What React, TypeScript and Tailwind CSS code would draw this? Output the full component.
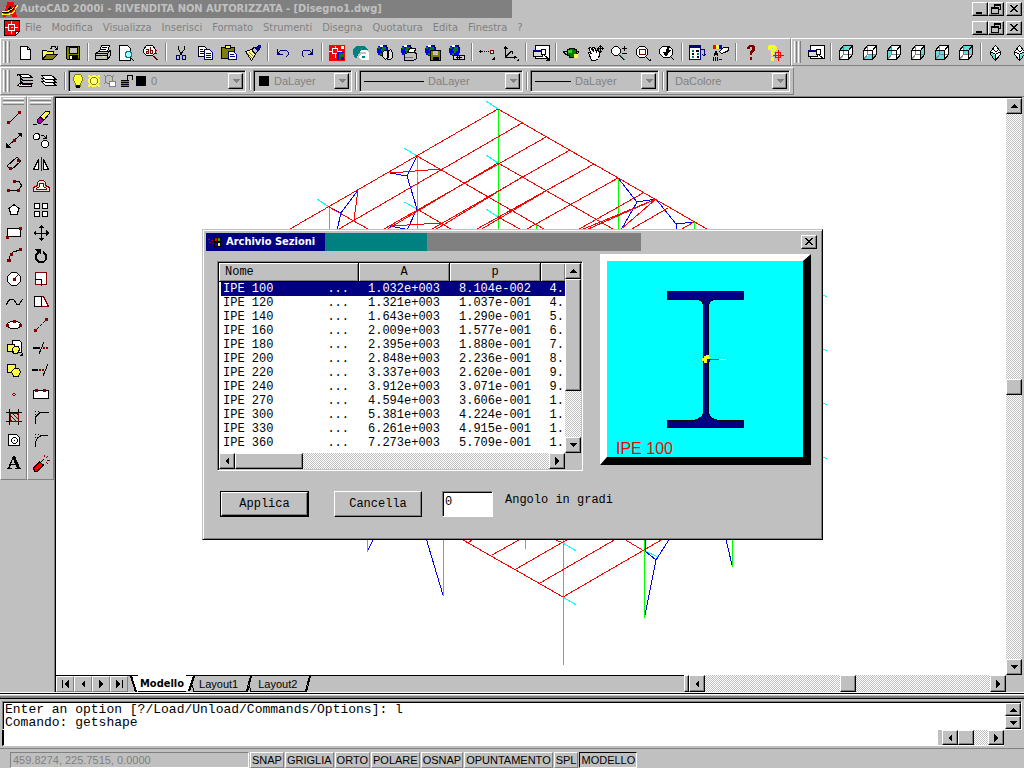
import { useState, type ReactNode } from 'react'
import clsx from 'clsx'

/** [path data, fill, stroke] */
type Shape = [string, string, string?]

type IconDef = { label: string; shapes: Shape[] }

const K = '#000000'
const W = '#ffffff'
const G = '#808080'
const NAVY = '#000080'
const OLIVE = '#808000'
const MAROON = '#800000'
const TEAL = '#008080'
const AQUA = '#60dede'
const YELLOW = '#ffff40'
const RED = '#ff0000'
const BLUE = '#0000ff'
const GREEN = '#008000'

const RAISED =
  'border border-t-white border-l-white border-r-black border-b-black bg-[#c0c0c0] shadow-[inset_-1px_-1px_#808080]'
const SUNKEN =
  'border border-t-[#808080] border-l-[#808080] border-r-white border-b-white shadow-[inset_1px_1px_#000]'
const DITHER =
  '[background:repeating-conic-gradient(#fff_0_25%,#c0c0c0_0_50%)_0_0/2px_2px]'

// Shared pieces of the "web" icons
const globe: Shape[] = [
  ['M1 4h1v-2h2v-1h5v1h2v2h1v5h-1v2h-2v1h-5v-1h-2v-2h-1z', BLUE],
  ['M2 3h2v2h-2zM6 3h4v4h-2v2h-2v-2h-1v-2h1zM4 9h2v2h-2z', GREEN],
  ['M4 1h3v2h-3z', W],
  ['M9 1h2v2h1v6h-1v-5h-1v-2h-1z', K],
]

const cube = (face: string): Shape[] => [
  ['M2.5 6.5l4-5h9v9l-4 5h-9z', W, K],
  [face, AQUA],
  ['M6.5 2v8.5h9M6.5 10.5l-4 5', 'none', G],
  ['M2.5 6.5h9v9h-9zM11.5 6.5l4-5M11.5 15.5l4-5M2.5 6.5l4-5h9v9l-4 5', 'none', K],
]

const iso = (face: string): Shape[] => [
  ['M8.5 1.5l5 6v3l-5 6l-5-6v-3z', W, K],
  [face, AQUA],
  ['M3.5 7.5l5 3l5-3M8.5 10.5v6M6 5l3 3l3-3', 'none', K],
]

const standardGroups: IconDef[][] = [
  [
    { label: 'Nuovo', shapes: [['M4.5 2.5h7l3 3v10h-10z', W, K], ['M11.5 2.5v3h3', 'none', K]] },
    {
      label: 'Apri',
      shapes: [
        ['M2.5 15.5v-9h4l1 1h6v3', YELLOW, K],
        ['M2.5 15.5l4-5h11l-5 5z', OLIVE, K],
        ['M10 4.5h1l1-2h3l2 3M15 5.5h3M17.5 2v4', 'none', K],
      ],
    },
    {
      label: 'Salva',
      shapes: [
        ['M2.5 2.5h13v13h-12l-1-1z', OLIVE, K],
        ['M5 3h8v6h-8z', '#c0c0c0', K],
        ['M5 11h9v5h-9z', K],
        ['M6 12h2v3h-2z', W],
      ],
    },
  ],
  [
    {
      label: 'Stampa',
      shapes: [
        ['M5.5 7.5l2-6h8l-2 6z', W, K],
        ['M8 3.5h5M7 5.5h5', 'none', K],
        ['M1.5 9.5l3-2h10l2-1v5l-3 4h-12z', '#c0c0c0', K],
        ['M1.5 9.5h12v6M2 11.5h11M13.5 9.5l3-3', 'none', K],
        ['M9 12h2v1h-2z', YELLOW],
      ],
    },
    {
      label: 'Anteprima di stampa',
      shapes: [
        ['M1.5 1.5h8l3 3v12h-11z', W, K],
        ['M7 8.5h1v-1h4v1h1v4h-1v1h-4v-1h-1z', '#a0ffff', TEAL],
        ['M13 14l3 3', 'none', NAVY],
        ['M12 13l4 4', 'none', K],
      ],
    },
    {
      label: 'Controllo ortografia',
      shapes: [
        ['M1.5 5.5l3-4h6l3 4v3l-3 3h-6l-3-3z', W, K],
        ['M4 5.5h2v4M6 7.5h-2v2h2M8.5 3v6.5h2v-3h-2M15 6.5h-2v3h2', 'none', MAROON],
        ['M11 12l4 4', 'none', K],
        ['M12 12l4 4', 'none', MAROON],
      ],
    },
  ],
  [
    {
      label: 'Taglia',
      shapes: [
        ['M6.5 1.5v4l4 6M12.5 1.5v4l-5 6', 'none', K],
        ['M4.5 11.5h3v4h-3zM10.5 11.5h3v4h-3z', 'none', NAVY],
      ],
    },
    {
      label: 'Copia',
      shapes: [
        ['M2.5 2.5h6l2 2v8h-8z', W, K],
        ['M4 5.5h3M4 7.5h4M4 9.5h4', 'none', K],
        ['M8.5 5.5h5l3 3v7h-8z', W, NAVY],
        ['M10 9.5h5M10 11.5h5M10 13.5h5', 'none', NAVY],
      ],
    },
    {
      label: 'Incolla',
      shapes: [
        ['M1.5 3.5h13v11h-13z', OLIVE, K],
        ['M5.5 1.5h5v3h-5z', YELLOW, K],
        ['M8.5 7.5h5l3 3v5h-8z', W, NAVY],
        ['M10 10.5h4M10 12.5h5', 'none', NAVY],
      ],
    },
    {
      label: 'Corrispondenza proprietà',
      shapes: [
        ['M1.5 7.5l6-2l4 5l-4 6z', '#fff8a0', K],
        ['M3 9l5 5M5 8l5 5', 'none', OLIVE],
        ['M8 5l3-2l3 4l-3 3z', '#c0c0c0', K],
        ['M12 4l4-3l1 2l-3 4z', NAVY, NAVY],
      ],
    },
  ],
  [
    { label: 'Annulla', shapes: [['M3.5 5v5h5M4 9l3-3h5l2 2v3l-2 2', 'none', NAVY], ['M3 6l4 5h-4z', NAVY]] },
    { label: 'Ripeti', shapes: [['M14.5 5v5h-5M14 9l-3-3h-5l-2 2v3l2 2', 'none', NAVY], ['M15 6l-4 5h4z', NAVY]] },
  ],
  [
    {
      label: 'Oggi',
      shapes: [
        ['M1 1h16v16h-16z', RED],
        ['M4.5 4.5h5v5h-5zM7 1.5v3M7 9.5v4M1 7h3M10 7h4', 'none', W],
        ['M9 8h7v8h-7z', BLUE],
        ['M11 9h5v4h-3v3h-2z', GREEN],
        ['M13 2h3v3h-3z', W],
      ],
    },
    {
      label: 'Point A',
      shapes: [
        ['M1 10v-4l3-4h8l4 4h-6l-4 4l-1 4h-2z', TEAL],
        ['M7 8l3-2h4l3 3v7h-8l-2-2v-2l3-2h4v-2z', W],
        ['M10 12h3v2h-3z', TEAL],
      ],
    },
    { label: 'Meet Now', shapes: [...globe, ['M6.5 8.5l2-2h3l1 2v5l-3 2l-3-3zM11.5 7.5l3-2l2 3v5l-2 2h-3z', '#e0e0e0', K]] },
    { label: 'Pubblica sul Web', shapes: [...globe, ['M7.5 8.5l2-4h6l-1 4z', W, K], ['M4.5 10.5l3-2h8l1 2v4l-3 2h-9z', '#c0c0c0', K], ['M5 13.5h8', 'none', OLIVE]] },
    { label: 'eTransmit', shapes: [...globe, ['M6.5 6.5h10v10h-10z', OLIVE, K], ['M9 7h5v4h-5z', '#c0c0c0'], ['M9 13h6v4h-6z', K]] },
    { label: 'Inserisci collegamento ipertestuale', shapes: [...globe, ['M5.5 11.5h6v4h-6zM9.5 11.5h7v4h-7z', '#d0d0d0', K], ['M8 13.5h6', 'none', K]] },
  ],
  [
    {
      label: 'Punto di riferimento',
      shapes: [
        ['M1 7.5h4M2.5 6v3M6 7.5h1M8 7.5h1M10 7.5h1', 'none', K],
        ['M12.5 6.5h3v3h-3z', W, MAROON],
        ['M13 16h4v-4z', K],
      ],
    },
    { label: 'UCS', shapes: [['M3.5 3v10h10M2 5l1.5-2l2 2M3.5 13l6-6M9 7.5h1v2M12 12l2 1.5l-2 1.5', 'none', K], ['M14 17h3v-3z', K]] },
  ],
  [
    {
      label: 'Viste con nome',
      shapes: [
        ['M3.5 1.5h14v13h-14z', W, K],
        ['M1.5 6.5h9v6h-9z', '#dddddd', K],
        ['M1 6h10v2h-10z', NAVY],
        ['M9.5 5.5h4v5h-4z', W, K],
        ['M12 11l5 4', 'none', K],
        ['M13 17h5v-5z', K],
      ],
    },
  ],
  [
    {
      label: 'Orbita 3D',
      shapes: [
        ['M1 8l3-1h10l3 1l-3 3h-9z', 'none', K],
        ['M5 5h2v-1h5v1h2v6h-2v2h-5v-2h-2z', GREEN, K],
        ['M6 6h4v3h-4z', '#30d030'],
        ['M12 10h4v4h-4z', YELLOW],
      ],
    },
    {
      label: 'Pan tempo reale',
      shapes: [
        ['M2.5 8.5l3 1l-3-5l2-1l3 4l-1-4h2l2 4l1-2h1l1 5l-1 4l-3 2h-4z', W, K],
        ['M14.5 1v8M11 4.5h7M13 2.5h3M13 7.5h3M12.5 3v3M16.5 3v3', 'none', K],
      ],
    },
    {
      label: 'Zoom tempo reale',
      shapes: [
        ['M1.5 5.5l3-3h3l3 3v3l-3 3h-3l-3-3z', W, K],
        ['M9 11l5 5M12 4.5h5M14.5 2v5M12 9.5h5', 'none', K],
        ['M10 11l5 5', 'none', TEAL],
      ],
    },
    {
      label: 'Zoom finestra',
      shapes: [
        ['M2.5 5.5l3-3h5l3 3v5l-3 3h-5l-3-3z', W, K],
        ['M5.5 5.5h6v5h-6z', 'none', MAROON],
        ['M11 12l4 4', 'none', K],
        ['M14 17h3v-3z', K],
      ],
    },
    {
      label: 'Zoom precedente',
      shapes: [
        ['M1.5 5.5l3-3h7l3 3v5l-3 3h-6l-4-4z', W, K],
        ['M9 3l-1 5h-3l3 5l5-7h-2l1-3z', K],
        ['M12 12l4 4', 'none', K],
      ],
    },
  ],
  [
    {
      label: 'DesignCenter',
      shapes: [
        ['M1.5 1.5h11v14h-11z', W, NAVY],
        ['M1 1h12v3h-12z', NAVY],
        ['M4 6h2v2h-2zM4 12h2v2h-2zM9 9h2v2h-2z', TEAL],
        ['M4 9h2v2h-2zM8 6h3v2h-3zM9 12h2v2h-2z', K],
        ['M13 5.5h3v6M14 10l2 2l2-2', 'none', NAVY],
      ],
    },
    {
      label: 'Proprietà',
      shapes: [
        ['M1 1h3v4h-3z', RED],
        ['M4 1h3v4h-3z', YELLOW],
        ['M7 1h3v4h-3z', BLUE],
        ['M2 11.5l2-4l2 4M3 10h3M1 13v4M3 13v4M5 13v4M7 15h3', 'none', K],
        ['M7.5 7.5l4-4h5v3l-4 2l-3 1z', W, K],
      ],
    },
  ],
  [
    { label: '?', shapes: [['M5 5v-2l2-2h4l2 2v3l-3 3v2h-2v-3l2-3v-2h-2v2zM8 13h2v3h-2z', MAROON]] },
    {
      label: 'Guida attiva',
      shapes: [
        ['M2 5v-2l2-2h4l2 2v3l-3 3v2h-2v-3l2-3v-2h-2v2zM5 13h2v3h-2z', '#ffff00', '#ffff00'],
        ['M9.5 8.5h5v5h-5zM12 6v11M7 11h11', 'none', RED],
      ],
    },
  ],
]

const viewGroups: IconDef[][] = [
  [{ label: 'Vista con nome', shapes: standardGroups[6][0].shapes.slice(0, 5) }],
  [
    { label: 'Vista superiore', shapes: cube('M4 6l3-4h8l-4 4z') },
    { label: 'Vista inferiore', shapes: cube('M4 15l3-4h8l-4 4z') },
    { label: 'Vista sinistra', shapes: cube('M3 14v-7l3-4v7z') },
    { label: 'Vista destra', shapes: cube('M12 14v-7l3-4v7z') },
    { label: 'Vista anteriore', shapes: cube('M3 7h8v8h-8z') },
    { label: 'Vista posteriore', shapes: cube('M7 2h8v8h-8z') },
  ],
  [
    { label: 'Vista isometrica SO', shapes: iso('M4 8l4 3v5l-4-6z') },
    { label: 'Vista isometrica SE', shapes: iso('M13 8l-4 3v5l4-6z') },
  ],
]

const layerIcons: IconDef[] = [
  {
    label: 'Rendi corrente il layer',
    shapes: [
      ['M2.5 2.5h10l4 3h-10z', W, K],
      ['M4 5.5l3 3h10M4 8.5l3 3h10', 'none', K],
      ['M1.5 13.5l3-3l2 2h9v2h-11z', YELLOW, K],
      ['M1.5 2v2M4.5 5v8', 'none', K],
    ],
  },
  {
    label: 'Layer',
    shapes: [
      ['M1.5 9.5h10l5 4h-11z', W, K],
      ['M1.5 6.5h10l5 4h-11z', W, K],
      ['M1.5 3.5h10l5 4h-11z', W, K],
    ],
  },
]

const drawIcons: IconDef[] = [
  { label: 'Linea', shapes: [['M4 14l10-10', 'none', K], ['M2 12h3v3h-3zM13 2h3v3h-3z', MAROON]] },
  { label: 'Linea di costruzione', shapes: [['M3 14l12-11', 'none', K], ['M1 16v-5l5 5zM17 1v5l-5-5z', K], ['M8 7h3v3h-3z', MAROON]] },
  { label: 'Multilinea', shapes: [['M2 11l10-9M6 15l10-9M2 11l4 4M12 2l4 4', 'none', K], ['M4 12h3v3h-3zM12 4h3v3h-3z', MAROON]] },
  { label: 'Polilinea', shapes: [['M3 12.5h10M9 3.5h5l2 3v2l-2 3', 'none', K], ['M2 11h3v3h-3zM12 11h3v3h-3zM8 2h3v3h-3z', MAROON]] },
  { label: 'Poligono', shapes: [['M9 3.5l5 4l-2 6h-6l-2-6z', W, K]] },
  { label: 'Rettangolo', shapes: [['M2.5 4.5h13v8h-13z', W, K], ['M1 12h3v3h-3zM14 3h3v3h-3z', MAROON]] },
  { label: 'Arco', shapes: [['M4 14l1-5l3-4l7-2', 'none', K], ['M2 12h4v3h-4zM5 6h3v3h-3zM14 1h3v3h-3z', MAROON]] },
  { label: 'Cerchio', shapes: [['M2.5 6.5l4-4h5l4 4v5l-4 4h-5l-4-4z', W, K], ['M9 9l4-4', 'none', MAROON], ['M8 8h3v3h-3z', MAROON]] },
  { label: 'Spline', shapes: [['M1.5 12l1-3l3-3h3l3 5h3l3-5', 'none', K]] },
  { label: 'Ellisse', shapes: [['M2.5 7.5l3-2h7l3 2v3l-3 2h-7l-3-2z', W, K], ['M1 8h3v3h-3zM14 8h3v3h-3zM8 4h3v3h-3z', MAROON]] },
  { label: 'Inserisci blocco', shapes: [['M7.5 1.5h7l2 2v10h-9z', W, K], ['M2.5 5.5h7v7h-7z', YELLOW, K], ['M7.5 9.5l2-2h4l1 3l-2 4h-4z', YELLOW, K], ['M14 17h4v-4z', K]] },
  { label: 'Crea blocco', shapes: [['M2.5 2.5h8v8h-8z', YELLOW, K], ['M6.5 9.5l3-3h4l2 3l-2 5h-5z', YELLOW, K]] },
  { label: 'Punto', shapes: [['M8 8h2v3h-2zM7 9h4v1h-4z', MAROON]] },
  { label: 'Tratteggio', shapes: [['M5 7l6 6M5 11l2 2M7 5l6 6M11 5l2 2', 'none', MAROON], ['M4.5 1v16M13.5 1v16M1 4.5h16M1 13.5h16', 'none', K], ['M5 5h8v8h-8z', 'none', MAROON]] },
  { label: 'Regione', shapes: [['M3.5 3.5h8l3 3v8h-11z', W, K], ['M6.5 8.5l2-2h2l2 2v2l-2 2h-2l-2-2z', W, K], ['M9 9h1v1h-1z', K]] },
  { label: 'Testo multilinea', shapes: [['M2 15v-1h1l5-12h2l5 12h1v1h-6v-1h2l-1-3h-5l-1 3h2v1zM6 10h4l-2-5z', K]] },
]

const modifyIcons: IconDef[] = [
  { label: 'Cancella', shapes: [['M1 15.5h4M11 15.5h5', 'none', K], ['M5 11l3-3l4 3l-3 3h-3z', '#a000a0', K], ['M8 8l6-6h3v3l-5 6z', YELLOW, K]] },
  { label: 'Copia oggetto', shapes: [['M1.5 3.5l2-2h3l1 2v3l-2 1h-3l-1-1zM9.5 10.5l2-2h3l2 2v3l-2 2h-3l-2-2z', W, K], ['M9 3h2l3 3M14 3v3h-3', 'none', K]] },
  { label: 'Specchio', shapes: [['M1.5 14.5l5-10v10zM16.5 14.5l-5-10v10z', W, K], ['M9 2v14', 'none', MAROON]] },
  { label: 'Offset', shapes: [['M1.5 13.5v-4l4-2v-3l2-2h4l2 2v3l4 2v4z', '#e0e0e0', MAROON], ['M4.5 11.5v-1l3-2v-3h4v3l3 2v1z', W, MAROON]] },
  { label: 'Serie', shapes: [['M2.5 2.5h5v5h-5zM10.5 2.5h5v5h-5zM2.5 10.5h5v5h-5zM10.5 10.5h5v5h-5z', W, K]] },
  { label: 'Sposta', shapes: [['M9 2v14M2 9h14', 'none', K], ['M9 1l3 3h-6zM9 17l3-3h-6zM1 9l3-3v6zM17 9l-3-3v6z', K]] },
  { label: 'Ruota', shapes: [['M3 2h6v6l-2-2l-2 3v3l2 2h4l2-2v-3l-2-3v-2l4 3v5l-3 4h-6l-3-4v-4l2-3z', K]] },
  { label: 'Scala', shapes: [['M3.5 2.5h11v12h-11z', W, MAROON], ['M3 9.5h6v6', 'none', K]] },
  { label: 'Stira', shapes: [['M2.5 3.5h7v10h-7z', W, K], ['M9.5 3.5h2l5 10h-7', W, MAROON]] },
  { label: 'Allunga', shapes: [['M5 13l2-2M8 10l2-2M11 7l2-2', 'none', K], ['M2 13h3v3h-3zM13 2h3v3h-3z', MAROON]] },
  { label: 'Taglia', shapes: [['M1 8h7v2h-7z', K], ['M7 15l5-12', 'none', K], ['M11 8h2v2h-2zM14 8h2v2h-2z', MAROON]] },
  { label: 'Estendi', shapes: [['M0 7h6v2h-6z', K], ['M11 14l5-12', 'none', K], ['M7 7h2v2h-2zM10 7h2v2h-2z', MAROON]] },
  { label: 'Spezza', shapes: [['M1.5 5.5h15v8h-15z', W, K], ['M3 4h3v3h-3zM11 4h3v3h-3z', MAROON]] },
  { label: 'Cima', shapes: [['M3.5 16v-7l5-5h8', 'none', K], ['M3 3.5h1M6 3.5h1M3.5 6v1', 'none', K]] },
  { label: 'Raccordo', shapes: [['M3.5 16v-5l2-4l3-2l8-1', 'none', K], ['M3 3.5h1M6 3.5h1M3.5 6v1', 'none', K]] },
  { label: 'Esplodi', shapes: [['M1.5 14l6-6l4 3l-6 6h-3z', RED, K], ['M9 8l3-3', 'none', K], ['M12 1v2M16 2l-2 2M15 6h3M14 8l2 2', 'none', MAROON]] },
]

const menus = ['File', 'Modifica', 'Visualizza', 'Inserisci', 'Formato', 'Strumenti', 'Disegna', 'Quotatura', 'Edita', 'Finestra', '?']

const sections = [
  ['IPE 100', '1.032e+003', '8.104e-002', '4.'],
  ['IPE 120', '1.321e+003', '1.037e-001', '4.'],
  ['IPE 140', '1.643e+003', '1.290e-001', '5.'],
  ['IPE 160', '2.009e+003', '1.577e-001', '6.'],
  ['IPE 180', '2.395e+003', '1.880e-001', '7.'],
  ['IPE 200', '2.848e+003', '2.236e-001', '8.'],
  ['IPE 220', '3.337e+003', '2.620e-001', '9.'],
  ['IPE 240', '3.912e+003', '3.071e-001', '9.'],
  ['IPE 270', '4.594e+003', '3.606e-001', '1.'],
  ['IPE 300', '5.381e+003', '4.224e-001', '1.'],
  ['IPE 330', '6.261e+003', '4.915e-001', '1.'],
  ['IPE 360', '7.273e+003', '5.709e-001', '1.'],
]

const statusModes = ['SNAP', 'GRIGLIA', 'ORTO', 'POLARE', 'OSNAP', 'OPUNTAMENTO', 'SPL', 'MODELLO']

function Icon({ shapes }: { shapes: Shape[] }) {
  return (
    <svg width="18" height="18" viewBox="0 0 18 18" shapeRendering="crispEdges" className="shrink-0" aria-hidden="true">
      {shapes.map(([d, fill, stroke], i) => (
        <path key={i} d={d} fill={fill} stroke={stroke} fillRule="evenodd" />
      ))}
    </svg>
  )
}

const arrowPaths = {
  up: 'M4 2l4 4h-8z',
  down: 'M0 2h8l-4 4z',
  left: 'M2 4l4-4v8z',
  right: 'M6 4l-4-4v8z',
}

function Arrow({ dir, color = K }: { dir: keyof typeof arrowPaths; color?: string }) {
  return (
    <svg width="8" height="8" viewBox="0 0 8 8" shapeRendering="crispEdges" aria-hidden="true">
      <path d={arrowPaths[dir]} fill={color} />
    </svg>
  )
}

function ScrollButton({ dir, label, className = 'size-4' }: { dir: keyof typeof arrowPaths; label: string; className?: string }) {
  return (
    <button aria-label={label} className={clsx('flex shrink-0 items-center justify-center', RAISED, className)}>
      <Arrow dir={dir} />
    </button>
  )
}

const CLOSE_GLYPH = 'M1 1h2v1h1v1h2v-1h1v-1h2v1h-1v1h-1v1h-1v1h1v1h1v1h1v1h-2v-1h-1v-1h-2v1h-1v1h-2v-1h1v-1h1v-1h1v-1h-1v-1h-1v-1h-1z'

const windowGlyphs: [string, string][] = [
  ['Riduci a icona', 'M1 8h6v2h-6z'],
  ['Ripristina', 'M3 0h7v6h-2v4h-8v-7h3zM4 2v1h4v2h1v-3zM1 5v4h6v-4z'],
  ['Chiudi', CLOSE_GLYPH],
]

function Glyph({ d }: { d: string }) {
  return (
    <svg width="10" height="10" viewBox="0 0 10 10" shapeRendering="crispEdges" aria-hidden="true">
      <path d={d} fill={K} fillRule="evenodd" />
    </svg>
  )
}

function WindowButtons() {
  return (
    <div className="ml-auto flex items-center pr-0.5">
      {windowGlyphs.map(([label, d]) => (
        <button
          key={label}
          aria-label={label}
          className={clsx('flex h-3.5 w-4 items-center justify-center', RAISED, label === 'Chiudi' && 'ml-0.5')}
        >
          <Glyph d={d} />
        </button>
      ))}
    </div>
  )
}

function Grip() {
  return (
    <div className="flex w-3 shrink-0 gap-px py-0.5 pl-0.5">
      <span className="w-[3px] border-l border-r border-l-white border-r-[#808080]" />
      <span className="w-[3px] border-l border-r border-l-white border-r-[#808080]" />
    </div>
  )
}

function Separator({ className = 'w-1.5' }: { className?: string }) {
  return (
    <div className={clsx('flex shrink-0 justify-center py-1', className)}>
      <span className="w-0.5 border-l border-r border-l-[#808080] border-r-white" />
    </div>
  )
}

function ToolButton({ icon, className }: { icon: IconDef; className: string }) {
  return (
    <button aria-label={icon.label} className={clsx('flex shrink-0 items-center justify-center', className)}>
      <Icon shapes={icon.shapes} />
    </button>
  )
}

function Toolbar({ groups }: { groups: IconDef[][] }) {
  return (
    <div className="flex h-7 shrink-0 border border-t-white border-l-white border-r-[#808080] border-b-[#808080] pr-[3px]">
      <Grip />
      {groups.map((group, i) => (
        <div key={i} className="flex">
          {i > 0 && <Separator />}
          {group.map((icon) => (
            <ToolButton key={icon.label} icon={icon} className="w-6 pt-0.5" />
          ))}
        </div>
      ))}
    </div>
  )
}

function Combo({ label, value, width, children }: { label: string; value: string; width: string; children?: ReactNode }) {
  return (
    <div className={clsx('my-0.5 flex shrink-0 items-center p-0.5 pl-1', SUNKEN, width)}>
      {children}
      <select
        aria-label={label}
        defaultValue={value}
        className="h-full min-w-0 flex-1 appearance-none bg-transparent pl-1 text-[11px] leading-4 text-[#808080] outline-none"
      >
        <option>{value}</option>
      </select>
      <span className={clsx('pointer-events-none flex h-full w-[15px] items-center justify-center', RAISED)}>
        <Arrow dir="down" color={G} />
      </span>
    </div>
  )
}

const Swatch = () => <span className="mx-px size-2.5 shrink-0 bg-black" />

function PropertiesBar() {
  return (
    <div className="flex h-7 w-max border border-t-white border-l-white border-r-[#808080] border-b-[#808080] pr-[3px]">
      <Grip />
      {layerIcons.map((icon) => (
        <ToolButton key={icon.label} icon={icon} className="w-6" />
      ))}
      <Separator className="w-[7px]" />
      <Combo label="Layer" value="0" width="w-[178px]">
        {/* on, thawed, viewport, lock, colour */}
        <svg width="74" height="16" viewBox="0 0 74 16" shapeRendering="crispEdges" className="shrink-0" aria-hidden="true">
          <path d="M.5 4.5l2-3h5l2 3v3l-2 3v3h-5v-3l-2-3z" fill={YELLOW} stroke={OLIVE} />
          <path d="M3 12h4v3h-4z" fill={K} />
          <path d="M15 2h2v1h2v-1h4v1h2v-1h2v2h-1v2h1v4h-1v2h1v2h-2v-1h-2v1h-4v-1h-2v1h-2v-2h1v-2h-1v-4h1v-2h-1z" fill={YELLOW} />
          <path d="M17.5 6.5l2-2h3l2 2v3l-2 2h-3l-2-2z" fill="#ffff80" stroke={OLIVE} />
          <path d="M32.5 4.5l2-2h3l2 2v4l-2 2h-3l-2-2zM31 2l2 2M41 2l-2 2M31 11l2-2" fill="none" stroke={G} />
          <path d="M36.5 8.5h6v5h-6z" fill={W} stroke={G} />
          <path d="M48 7h8v7h-8z" fill={OLIVE} />
          <path d="M48 7.5h8M48 9.5h8M48 11.5h8M48 13.5h8M54.5 7v-4l1-1h3l1 1v4" fill="none" stroke={K} />
          <path d="M63 3h10v10h-10z" fill={K} />
        </svg>
      </Combo>
      <Separator className="w-[7px]" />
      <Combo label="Colore" value="DaLayer" width="w-[99px]">
        <Swatch />
      </Combo>
      <Separator className="w-[7px]" />
      <Combo label="Tipo di linea" value="DaLayer" width="w-[164px]">
        <span className="h-px w-[60px] bg-black" />
      </Combo>
      <Separator className="w-[7px]" />
      <Combo label="Spessore linea" value="DaLayer" width="w-[129px]">
        <span className="h-px w-9 bg-black" />
      </Combo>
      <Separator className="w-[7px]" />
      <Combo label="Stile di stampa" value="DaColore" width="w-[124px]" />
    </div>
  )
}

function SideBar({ icons }: { icons: IconDef[] }) {
  return (
    <div className="flex w-[27px] flex-col self-start border border-t-white border-l-white border-r-[#808080] border-b-[#808080] pb-[5px]">
      <div className="mb-px flex flex-col gap-px px-0.5 pt-px">
        <span className="h-[3px] border-t border-b border-t-white border-b-[#808080]" />
        <span className="h-[3px] border-t border-b border-t-white border-b-[#808080]" />
      </div>
      {icons.map((icon) => (
        <ToolButton key={icon.label} icon={icon} className="h-[23px]" />
      ))}
    </div>
  )
}

/** Wireframe of the roof structure, in drawing coordinates */
function Wireframe() {
  return (
    <svg className="absolute inset-0 h-full w-full" shapeRendering="crispEdges" fill="none" aria-hidden="true">
      <g transform="translate(-56 -98)">
        <path
          stroke="#00ff00"
          d="M498.5 109v130M417.5 156v80M329.5 207v30M618.5 178v60M694.5 222v20M536.5 223v20M367.5 530v22M443.5 530v66M525.5 530v19M563.5 530v135M644.5 530v88M732.5 530v37"
        />
        <path
          stroke="#00ffff"
          d="M486 101l12 8M404 148l13 8M486 155l12 8M317 199l12 8M404 202l13 7M486 209l12 8M823 295l4 2M823 349l4 2M823 403l4 2M823 457l4 2M563 543l13 8M563 597l13 8M645 551l13 6"
        />
        <path
          stroke="#0000ff"
          d="M417 156L407 176L417 209L407 230M390 173L407 176M390 226L405 229M358 190L341 213L337 230M329 207L341 213M618 178L637 202L656 199L676 224L694 222M637 202L621 230M676 224V232M374 538L368 550M426 538L443 595M646 538L645 551L656 560L645 615M656 560L670 538M725 535L732 565"
        />
        <path
          stroke="#ff0000"
          d="M498 109L290 229M498 109L707 229M522 123L339 229M546 137L384 229M570 150L432 229M594 164L477 229M618 178L527 229M643 193L574 232M668 208L630 230M694 222L680 230M498 163L386 230M522 177L435 230M546 191L480 230M417 156L544 229M498 163L613 229M329 207L368 229M417 209L451 229M498 217L520 229M390 173L441 169M390 226L441 223M358 190L354 220M656 199L586 230M656 199L581 230M656 199L620 230M463 540L563 597L663 539M492 555L519 540M516 569L570 538M540 583L616 539M468 543L472 540M556 540L563 543M624 539L644 551"
        />
      </g>
    </svg>
  )
}

function SectionPreview({ name }: { name: string }) {
  return (
    <div className="-mt-[7px] border-t-[7px] border-l-[7px] border-r-8 border-b-8 border-t-white border-l-white border-r-black border-b-black bg-[#00ffff]">
      <svg width="196" height="196" viewBox="0 0 196 196" shapeRendering="crispEdges" role="img">
        <path
          d="M60.5 30.5h76v8h-30q-5 2-5 8v105q1 6 10 8h25v7h-76v-7h26q9-2 10-8v-105q0-6-5-8h-31z"
          fill={NAVY}
          stroke={K}
        />
        <path d="M102 98.5h10" stroke={RED} />
        <path d="M112 98.5h7" stroke={W} />
        <path d="M97 95h2v-1h3v2h1v3h-3v3h-3v-2h-2v-3h2z" fill="#ffff00" />
        <path d="M100 98h3v3h-3z" fill={BLUE} />
        <text x="9" y="193" fontSize="16" fill={RED} className="font-['Liberation_Sans',sans-serif]">
          {name}
        </text>
      </svg>
    </div>
  )
}

function SectionsDialog() {
  const [selected, setSelected] = useState(0)
  const [angle, setAngle] = useState('0')

  return (
    <div
      role="dialog"
      aria-labelledby="sections-title"
      className="absolute top-[131px] left-[146px] w-[621px] border border-t-[#c0c0c0] border-l-[#c0c0c0] border-r-black border-b-black bg-[#c0c0c0] p-[3px] shadow-[inset_1px_1px_#fff,inset_-1px_-1px_#808080]"
    >
      {/* Title bar, four palette bands */}
      <div className="flex h-[18px]">
        <div className="flex w-[119px] items-center gap-1 bg-[#000080] pl-0.5">
          <svg width="14" height="12" viewBox="0 0 14 12" shapeRendering="crispEdges" aria-hidden="true">
            <path d="M0 3h2v1h-2zM3 4h2v1h-2zM1 6h2v1h-2zM4 7h2v1h-2z" fill="#a00000" />
            <path d="M6 1h7v10h-7z" fill={K} />
            <path d="M7 2h2v3h-2z" fill={RED} />
            <path d="M10 2h2v3h-2z" fill="#00c000" />
            <path d="M7 7h2v3h-2z" fill={BLUE} />
            <path d="M10 7h2v3h-2z" fill="#ffff00" />
          </svg>
          <h2 id="sections-title" className="text-[11px] font-bold whitespace-nowrap text-white">
            Archivio Sezioni
          </h2>
        </div>
        <span className="w-[102px] bg-[#008080]" />
        <span className="w-[214px] bg-[#808080]" />
        <button aria-label="Chiudi" className={clsx('mt-0.5 mr-0.5 ml-auto flex h-3.5 w-4 items-center justify-center', RAISED)}>
          <Glyph d={CLOSE_GLYPH} />
        </button>
      </div>

      <div className="font-['Liberation_Mono',monospace] text-[12px] leading-[14px] text-black">
        <div className="flex items-start gap-[17px] pt-[10px] pl-[11px]">
          {/* Section list */}
          <div className={clsx('flex h-[210px] w-[366px] flex-col p-px', SUNKEN)}>
            <div className="flex min-h-0 flex-1">
              <div className="min-w-0 flex-1 overflow-hidden bg-white">
                <table className="w-full table-fixed border-separate border-spacing-0">
                  <colgroup>
                    <col className="w-[140px]" />
                    <col className="w-[91px]" />
                    <col className="w-[91px]" />
                    <col />
                  </colgroup>
                  <thead>
                    <tr className="h-[19px] bg-[#c0c0c0]">
                      {['Nome', 'A', 'p', ''].map((name, i) => (
                        <th
                          key={i}
                          className={clsx(
                            'border-b border-black p-0 font-normal shadow-[inset_1px_1px_#fff,inset_-1px_-1px_#808080]',
                            i < 3 && 'border-r',
                            i === 0 ? 'pl-1.5 text-left' : 'text-center'
                          )}
                        >
                          {name}
                        </th>
                      ))}
                    </tr>
                  </thead>
                  <tbody>
                    {sections.map(([name, area, weight, next], i) => (
                      <tr
                        key={name}
                        onClick={() => setSelected(i)}
                        className={clsx('h-[14px]', i === selected && 'bg-[#000080] text-white')}
                      >
                        <td className="border-l-2 border-white py-0 pr-[10px] pl-0.5">
                          <span className="flex justify-between">
                            <span>{name}</span>
                            <span>...</span>
                          </span>
                        </td>
                        <td className="p-0 pr-[10px] text-right">{area}</td>
                        <td className="p-0 pr-[10px] text-right">{weight}</td>
                        <td className="p-0 pr-px text-right">{next}</td>
                      </tr>
                    ))}
                  </tbody>
                </table>
              </div>
              <div className={clsx('flex w-4 flex-col', DITHER)}>
                <ScrollButton dir="up" label="Scorri su" />
                <span className={clsx('h-28', RAISED)} />
                <span className="flex-1" />
                <ScrollButton dir="down" label="Scorri giù" />
              </div>
            </div>
            <div className="flex h-4">
              <div className={clsx('flex flex-1', DITHER)}>
                <ScrollButton dir="left" label="Scorri a sinistra" />
                <span className={clsx('w-[68px]', RAISED)} />
                <span className="flex-1" />
                <ScrollButton dir="right" label="Scorri a destra" />
              </div>
              <span className="w-4 bg-[#c0c0c0]" />
            </div>
          </div>

          <SectionPreview name={sections[selected][0]} />
        </div>

        <div className="mt-5 mb-[19px] flex items-start pl-[14px]">
          <div className="border border-black">
            <button className={clsx('h-6 w-[87px]', RAISED)}>Applica</button>
          </div>
          <button className={clsx('ml-[25px] h-[26px] w-[88px]', RAISED)}>Cancella</button>
          <input
            id="angle"
            value={angle}
            onChange={(e) => setAngle(e.target.value)}
            className={clsx('ml-5 h-[26px] w-[51px] bg-white pb-1 pl-0.5 outline-none', SUNKEN)}
          />
          <label htmlFor="angle" className="ml-3 pt-0.5">
            Angolo in gradi
          </label>
        </div>
      </div>
    </div>
  )
}

function LayoutTabs() {
  const navGlyphs: [string, string][] = [
    ['Primo', 'M1 0h1v8h-1zM8 0v8l-5-4z'],
    ['Precedente', 'M6 0v8l-4-4z'],
    ['Successivo', 'M2 0v8l4-4z'],
    ['Ultimo', 'M7 0h1v8h-1zM1 0v8l5-4z'],
  ]
  return (
    <div className="flex min-w-0 flex-1 border-t border-black text-[11px] leading-4 text-black">
      {navGlyphs.map(([label, d]) => (
        <button key={label} aria-label={label} className="flex w-[18px] items-center justify-center border border-t-white border-l-white border-r-[#808080] border-b-[#808080]">
          <svg width="9" height="8" viewBox="0 0 9 8" shapeRendering="crispEdges" aria-hidden="true">
            <path d={d} fill={K} />
          </svg>
        </button>
      ))}
      <svg width="9" height="16" viewBox="0 0 9 16" shapeRendering="crispEdges" className="ml-px shrink-0" aria-hidden="true">
        <path d="M1 -1h8v17h-2z" fill={W} />
        <path d="M2 0l5 16" fill="none" stroke={K} strokeWidth="2" />
      </svg>
      <button className="-mt-px border-b border-black bg-white px-0.5 pt-px font-bold">Modello</button>
      <svg width="12" height="16" viewBox="0 0 12 16" shapeRendering="crispEdges" className="shrink-0" aria-hidden="true">
        <path d="M0 0h7l-5 15h-2z" fill={W} />
        <path d="M7.5 0l-5 15M6 9l2 6.5h4" fill="none" stroke={K} />
        <path d="M8.5 0l-5 15" fill="none" stroke={K} />
      </svg>
      <button className="border-b border-black px-px font-['Liberation_Sans',sans-serif]">Layout1</button>
      <svg width="18" height="16" viewBox="0 0 18 16" shapeRendering="crispEdges" className="shrink-0" aria-hidden="true">
        <path d="M12.5 0l-4 15.5h-9M10 9l2 6.5h6M11.5 0l-4 15" fill="none" stroke={K} />
      </svg>
      <button className="border-b border-black px-px font-['Liberation_Sans',sans-serif]">Layout2</button>
      <svg width="14" height="16" viewBox="0 0 14 16" shapeRendering="crispEdges" className="shrink-0" aria-hidden="true">
        <path d="M12.5 0l-4 15.5h-9M11.5 0l-4 15" fill="none" stroke={K} />
      </svg>
    </div>
  )
}

function CommandLine() {
  const [command, setCommand] = useState('')
  return (
    <div className="p-0.5">
      <div className={clsx('flex bg-white pt-px pl-px', SUNKEN, 'border-b-[#808080]')}>
        <div className="flex-1 pl-px font-['Liberation_Mono',monospace] text-[13px] leading-[13px] whitespace-nowrap text-black">
          <p>Enter an option [?/Load/Unload/Commands/Options]: l</p>
          <p>Comando: getshape</p>
        </div>
        <div className="flex flex-col">
          <ScrollButton dir="up" label="Riga precedente" className="h-[13px] w-4" />
          <ScrollButton dir="down" label="Riga successiva" className="h-[13px] w-4" />
        </div>
      </div>
      <div className="mr-[18px] flex h-4 border-b border-l-2 border-b-white border-l-black bg-[#c0c0c0]">
        <input
          aria-label="Comando"
          value={command}
          onChange={(e) => setCommand(e.target.value)}
          className="mr-1 min-w-0 flex-1 bg-white px-0.5 font-['Liberation_Mono',monospace] text-[13px] outline-none"
        />
        <div className={clsx('flex', DITHER)}>
          <ScrollButton dir="left" label="Scorri a sinistra" className="h-[15px] w-4" />
          <span className={clsx('w-4', RAISED)} />
          <span className="w-[14px]" />
          <ScrollButton dir="right" label="Scorri a destra" className="h-[15px] w-4" />
        </div>
      </div>
    </div>
  )
}

export default function App() {
  return (
    <div className="flex h-screen flex-col overflow-hidden bg-[#c0c0c0] font-['DejaVu_Sans_Condensed','DejaVu_Sans',sans-serif] text-[#808080]">
      {/* Title bar */}
      <header className="flex h-[18px] shrink-0">
        <div className="flex w-1/2 items-center gap-0.5 bg-[#808080]">
          <svg width="18" height="16" viewBox="0 0 18 16" shapeRendering="crispEdges" className="shrink-0" aria-hidden="true">
            <path d="M3 16l3-9l1-6h7l1 6l2 9h-5l-1-4h-3l-2 4z" fill={RED} />
            <path d="M9 5h2l1 4h-4z" fill={K} />
            <path d="M2 10.5h5l3-1l4-3M3 13.5h4l5-1l3-3l1-3l2-2M2 10v4" fill="none" stroke="#ffff00" />
            <path d="M2 11.5h6l5-3l3-4" fill="none" stroke={K} />
          </svg>
          <h1 className="text-[11px] font-bold whitespace-nowrap text-[#c0c0c0]">
            AutoCAD 2000i - RIVENDITA NON AUTORIZZATA - [Disegno1.dwg]
          </h1>
        </div>
        <WindowButtons />
      </header>

      {/* Menu bar */}
      <nav className="flex h-5 shrink-0 items-center">
        <svg width="17" height="17" viewBox="0 0 17 17" shapeRendering="crispEdges" className="mr-1 ml-1 shrink-0" aria-hidden="true">
          <path d="M.5 .5h15v11l-4 4h-11z" fill={RED} stroke={K} />
          <path d="M4.5 4.5h6v6h-6zM7.5 1v3M7.5 11v3M1 7.5h3M11 7.5h3M6.5 7.5h2" fill="none" stroke={W} />
          <path d="M11.5 15.5v-4h4z" fill={W} stroke={K} />
        </svg>
        <div className="flex gap-2.5 text-[11px] leading-4">
          {menus.map((name) => (
            <button key={name}>{name}</button>
          ))}
        </div>
        <WindowButtons />
      </nav>

      <div className="flex shrink-0 overflow-hidden">
        <Toolbar groups={standardGroups} />
        <Toolbar groups={viewGroups} />
      </div>
      <div className="shrink-0 py-px font-['Liberation_Sans',sans-serif]">
        <PropertiesBar />
      </div>

      {/* Workspace */}
      <main className="flex min-h-0 flex-1">
        <SideBar icons={drawIcons} />
        <SideBar icons={modifyIcons} />
        <div className="flex min-w-0 flex-1 flex-col border-t border-l border-[#808080] pr-0.5">
          <div className="flex min-h-0 flex-1 border-t border-l border-black">
            <div className="relative min-w-0 flex-1 overflow-hidden bg-white">
              <Wireframe />
              <SectionsDialog />
            </div>
            <div className={clsx('flex w-4 flex-col', DITHER)}>
              <ScrollButton dir="up" label="Scorri su" />
              <span className="flex-1" />
              <span className={clsx('size-4', RAISED)} />
              <span className="flex-1" />
              <ScrollButton dir="down" label="Scorri giù" />
            </div>
          </div>
          <div className="flex h-[17px] shrink-0 border-l border-black">
            <LayoutTabs />
            <div className={clsx('flex w-1/3', DITHER)}>
              <span className={clsx('w-[5px]', RAISED)} />
              <ScrollButton dir="left" label="Scorri a sinistra" className="h-full w-4" />
              <span className="flex-1" />
              <span className={clsx('w-4', RAISED)} />
              <span className="flex-1" />
              <ScrollButton dir="right" label="Scorri a destra" className="h-full w-4" />
            </div>
            <span className="w-4" />
          </div>
        </div>
      </main>

      <div className="shrink-0 border-t border-white">
        <div className="h-1.5 border-t border-b border-black bg-[#c0c0c0] shadow-[inset_0_1px_#fff,inset_0_-2px_#808080]" />
      </div>
      <CommandLine />

      {/* Status bar */}
      <footer className="flex shrink-0 gap-px border-t border-[#808080] pt-[3px] pl-[10px] font-['Liberation_Sans',sans-serif] text-[11px] leading-[14px]">
        <span className="w-[239px] border border-t-[#808080] border-l-[#808080] border-r-white border-b-white px-0.5">
          459.8274, 225.7515, 0.0000
        </span>
        {statusModes.map((mode) => (
          <button
            key={mode}
            className={clsx(
              'border px-px text-black',
              mode === 'MODELLO'
                ? 'border-t-black border-l-black border-r-white border-b-white'
                : 'border-t-white border-l-white border-r-[#808080] border-b-[#808080]'
            )}
          >
            {mode}
          </button>
        ))}
      </footer>
    </div>
  )
}
